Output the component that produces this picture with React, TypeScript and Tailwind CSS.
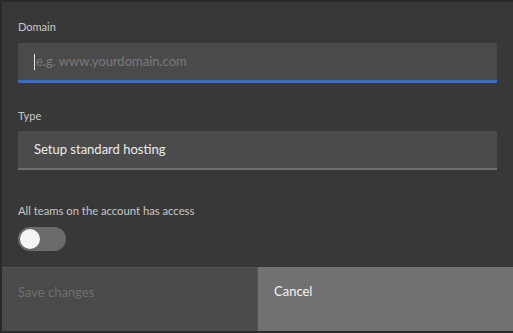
import React from "react";

export default function App() {
  return (
    <div
      className="w-[513px] h-[333px] bg-[#2a2a2a] pt-[2px] pl-[2px] pb-[2px]"
      style={{ fontFamily: "Lato, 'Noto Sans', sans-serif" }}
    >
      <div className="h-full bg-[#383838] flex flex-col">
        <div className="flex flex-col px-4 pt-[18px]">
          <label className="text-[11px] leading-[14px] text-[#c8c8c8]">Domain</label>
          <div className="mt-[9px] h-[40px] bg-[#4a4a4a] border-b-[3px] border-[#3b6cc6] flex items-center pl-4">
            <span className="w-px h-[16px] bg-[#e6e6e6]" />
            <span className="text-[13px] text-[#7a7a7a] ml-px">e.g. www.yourdomain.com</span>
          </div>
          <label className="mt-[26px] text-[11px] leading-[14px] text-[#c8c8c8]">Type</label>
          <div className="mt-[8px] h-[39px] bg-[#4b4b4b] border-b-[2px] border-[#6e6e6e] flex items-center pl-4">
            <span className="text-[13px] text-[#ececec]">Setup standard hosting</span>
          </div>
          <label className="mt-[34px] text-[11.25px] leading-[14px] text-[#c8c8c8]">
            All teams on the account has access
          </label>
          <div className="mt-[9px] w-[48px] h-[24px] rounded-full bg-[#6a6a6a] flex items-center pl-[2px]">
            <span className="w-[20px] h-[20px] rounded-full bg-[#f4f4f4]" />
          </div>
        </div>
        <div className="mt-auto flex h-[64px]">
          <button className="w-[256px] bg-[#4a4a4a] border-t border-r border-[#555555] text-left pl-4 pt-[15px] self-stretch flex items-start text-[13px] leading-[18px] text-[#6f6f6f]">
            Save changes
          </button>
          <button className="flex-1 bg-[#717171] text-left pl-4 pt-[15px] flex items-start text-[13px] leading-[18px] text-[#f2f2f2]">
            Cancel
          </button>
        </div>
      </div>
    </div>
  );
}
